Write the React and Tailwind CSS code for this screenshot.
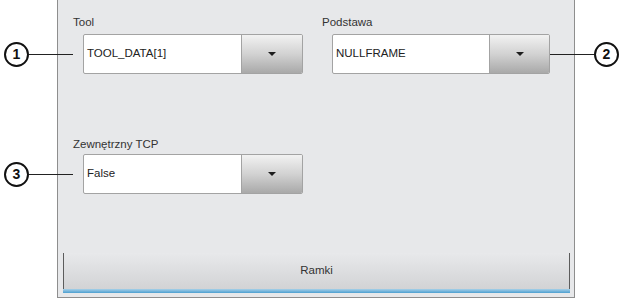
function Dropdown({ value, width, buttonWidth }) {
  return (
    <div
      className="flex h-[40px] rounded-[2px] border border-[#a3a3a3] bg-white overflow-hidden"
      style={{ width }}
    >
      <div className="flex-1 flex items-center pl-[3px] text-[11.5px] text-[#222]">
        {value}
      </div>
      <div
        className="h-full flex items-center justify-center border-l border-[#a3a3a3] bg-gradient-to-b from-[#f2f2f2] via-[#d2d2d2] to-[#a9a9a9]"
        style={{ width: buttonWidth }}
      >
        <div className="w-0 h-0 border-l-[4px] border-r-[4px] border-t-[4px] border-l-transparent border-r-transparent border-t-[#1e1e1e]" />
      </div>
    </div>
  )
}

function Callout({ n, className }) {
  return (
    <div
      className={
        'absolute w-[25px] h-[25px] rounded-full border-[2px] border-[#111] bg-white flex items-center justify-center text-[14px] font-bold text-[#111] ' +
        className
      }
    >
      {n}
    </div>
  )
}

export default function App() {
  return (
    <div
      className="relative w-[623px] h-[300px] bg-white overflow-hidden"
      style={{ fontFamily: '"Liberation Sans", Arial, sans-serif' }}
    >
      <div className="ml-[57px] w-[518px] h-[298px] border-x border-b border-[#8e8e8e] bg-[#e7e8ea] flex flex-col">
        <div className="pl-[15px] pt-[15px]">
          <div className="flex">
            <div className="w-[249px]">
              <div className="h-[14px] leading-[14px] text-[11.5px] text-[#333]">Tool</div>
              <div className="mt-[5px] ml-[10px]">
                <Dropdown value="TOOL_DATA[1]" width={220} buttonWidth={61} />
              </div>
            </div>
            <div>
              <div className="h-[14px] leading-[14px] text-[11.5px] text-[#333]">Podstawa</div>
              <div className="mt-[5px] ml-[10px]">
                <Dropdown value="NULLFRAME" width={218} buttonWidth={60} />
              </div>
            </div>
          </div>

          <div className="mt-[63px] w-[249px]">
            <div className="h-[14px] leading-[14px] text-[11.5px] text-[#333]">Zewnętrzny TCP</div>
            <div className="mt-[3px] ml-[10px]">
              <Dropdown value="False" width={220} buttonWidth={61} />
            </div>
          </div>
        </div>

        <div className="flex-1" />

        <div className="ml-[5px] mr-[4px] mb-[4px] flex flex-col">
          <div className="h-[36px] border-x border-[#5c5c5c] bg-gradient-to-b from-[#e8e9eb] to-[#d2d3d5] flex items-center justify-center text-[11.5px] text-[#333]">
            Ramki
          </div>
          <div className="h-[4px] bg-gradient-to-b from-[#a6d0e8] to-[#4a9fd0]" />
        </div>
      </div>

      <Callout n="1" className="left-[4px] top-[42px]" />
      <div className="absolute left-[29px] top-[54px] w-[44px] h-px bg-[#222]" />

      <Callout n="2" className="left-[594px] top-[42px]" />
      <div className="absolute left-[550px] top-[54px] w-[44px] h-px bg-[#222]" />

      <Callout n="3" className="left-[4px] top-[162px]" />
      <div className="absolute left-[29px] top-[174px] w-[44px] h-px bg-[#222]" />
    </div>
  )
}
